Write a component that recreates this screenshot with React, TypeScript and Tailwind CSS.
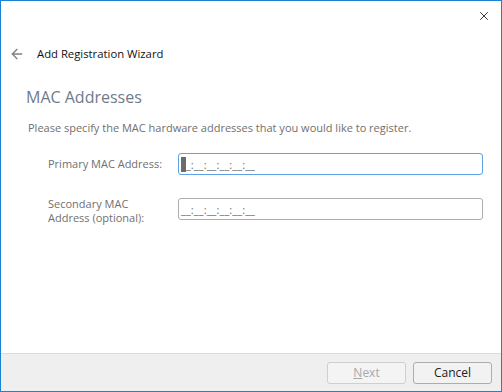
import { ArrowLeft, X } from 'lucide-react';

const font = { fontFamily: '"Open Sans", "Noto Sans", sans-serif' };

function MaskInput({ focused }: { focused?: boolean }) {
  return (
    <div
      className={`flex h-[22px] w-[305px] items-center rounded-[3px] border bg-white px-[2px] ${
        focused ? 'border-[#5ea1e6]' : 'border-[#adadad]'
      }`}
    >
      <span className="text-[11px] leading-none tracking-[0.1px] text-[#6b6b6b]">
        {focused ? <span className="bg-[#6b6b6b] text-[#6b6b6b]">_</span> : '_'}
        _:__:__:__:__:__
      </span>
    </div>
  );
}

export default function App() {
  return (
    <div
      className="flex h-[392px] w-[502px] flex-col border border-[#1a82d4] bg-white text-[12px]"
      style={font}
    >
      <div className="flex h-[28px] justify-end pr-[10px] pt-[8px]">
        <X className="h-[14px] w-[14px] text-[#111]" strokeWidth={1.4} />
      </div>
      <div className="flex items-center pl-[8px] pt-[17px]">
        <ArrowLeft className="h-[16px] w-[16px] text-[#808080]" strokeWidth={2} />
        <span className="ml-[12px] text-[11.3px] text-[#111]">Add Registration Wizard</span>
      </div>
      <div className="flex flex-1 flex-col pl-[25px] pr-[18px]">
        <h1 className="mt-[22px] text-[16px] font-normal text-[#6f7b8b]">MAC Addresses</h1>
        <p className="mt-[11px] pl-[2px] text-[11px] text-[#707070]">
          Please specify the MAC hardware addresses that you would like to register.
        </p>
        <div className="mt-[17px] flex items-center">
          <span className="w-[152px] pl-[22px] text-[11px] text-[#707070]">Primary MAC Address:</span>
          <MaskInput focused />
        </div>
        <div className="mt-[23px] flex items-start">
          <span className="-mt-[1px] w-[152px] pl-[22px] text-[11px] leading-[14px] text-[#707070]">
            Secondary MAC
            <br />
            Address (optional):
          </span>
          <MaskInput />
        </div>
      </div>
      <div className="flex h-[38px] items-center justify-end gap-[7px] border-t border-[#dcdcdc] bg-[#efefef] pr-[9px]">
        <button className="h-[22px] w-[79px] rounded-[3px] border border-[#cfcfcf] bg-[#f4f4f4] text-[12px] text-[#a8a8a8]">
          <span className="underline">N</span>ext
        </button>
        <button className="h-[22px] w-[79px] rounded-[3px] border border-[#adadad] bg-[#f2f2f2] text-[12px] text-[#222]">
          Cancel
        </button>
      </div>
    </div>
  );
}
